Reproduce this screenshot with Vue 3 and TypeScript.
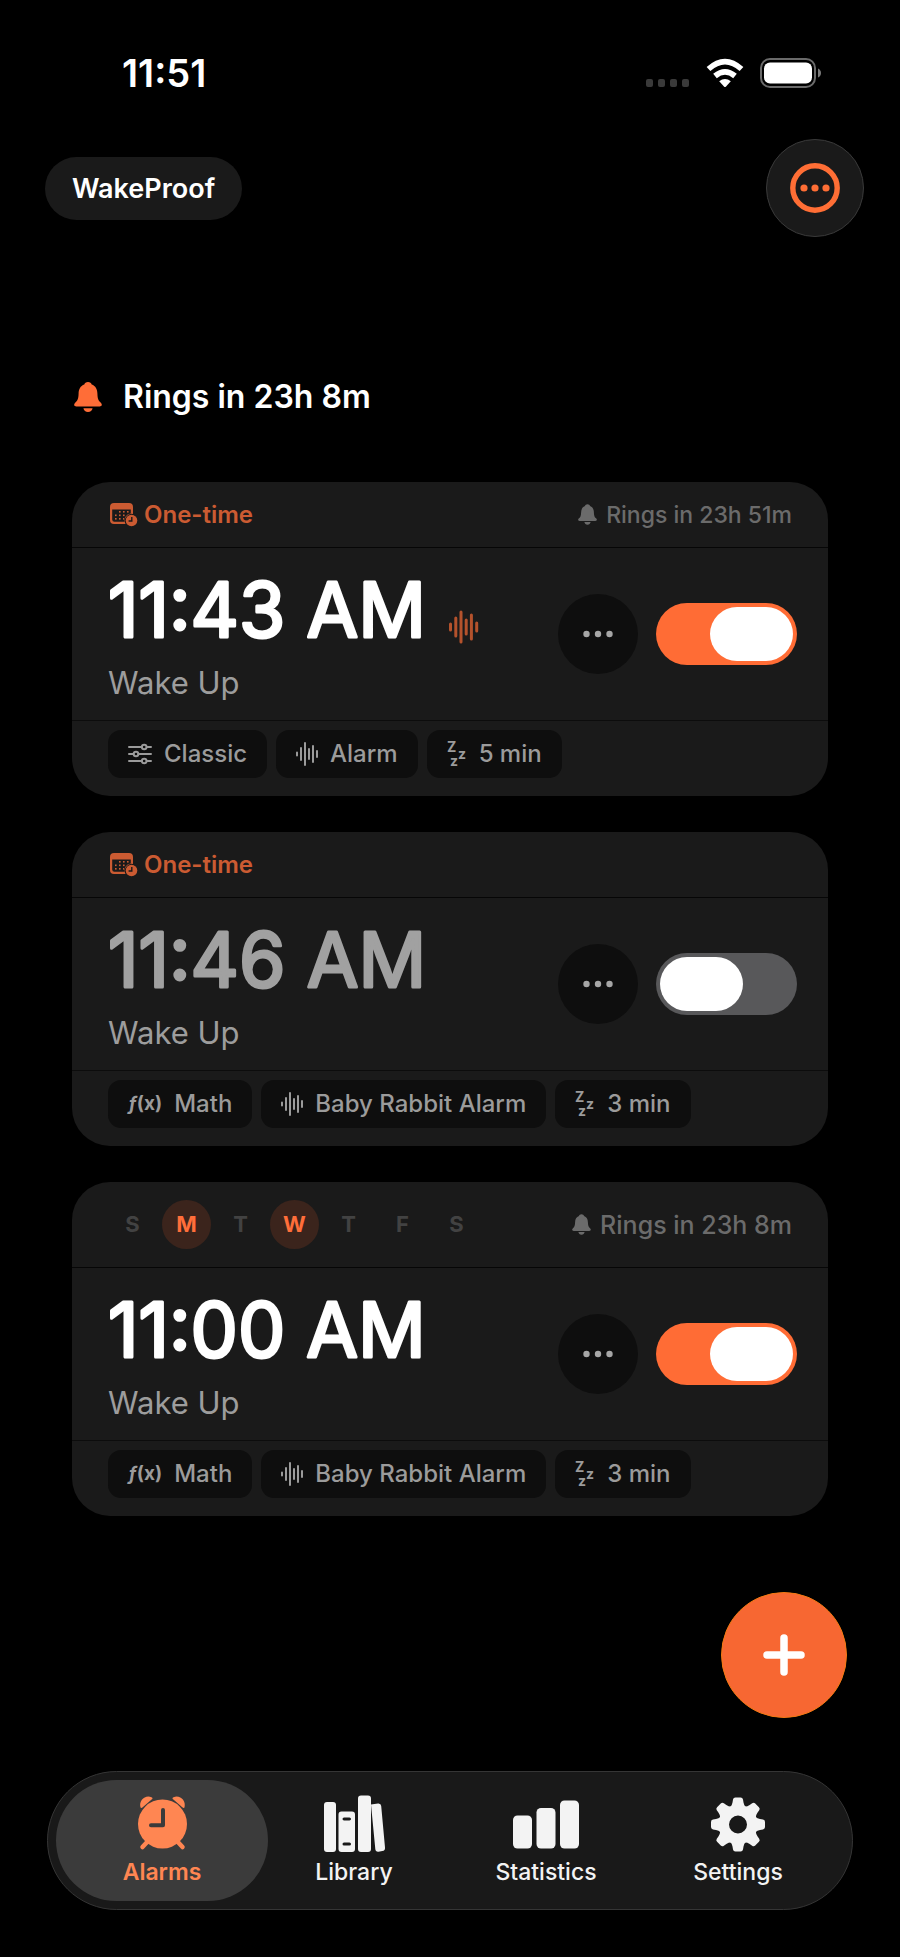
<script setup lang="ts">
import { reactive, ref } from 'vue'

type IconName = 'sliders' | 'wave' | 'zzz' | 'fx'

interface Chip {
  icon: IconName
  label: string
}

interface Alarm {
  id: number
  time: string
  label: string
  days: number[]
  rings: string
  vibrates: boolean
  enabled: boolean
  chips: Chip[]
}

type TabName = 'Alarms' | 'Library' | 'Statistics' | 'Settings'

const weekdays = ['S', 'M', 'T', 'W', 'T', 'F', 'S']
const tabs: TabName[] = ['Alarms', 'Library', 'Statistics', 'Settings']
const activeTab = ref<TabName>('Alarms')
const gearAngles = [0, 45, 90, 135, 180, 225, 270, 315]

const alarms = reactive<Alarm[]>([
  {
    id: 1,
    time: '11:43 AM',
    label: 'Wake Up',
    days: [],
    rings: 'Rings in 23h 51m',
    vibrates: true,
    enabled: true,
    chips: [
      { icon: 'sliders', label: 'Classic' },
      { icon: 'wave', label: 'Alarm' },
      { icon: 'zzz', label: '5 min' },
    ],
  },
  {
    id: 2,
    time: '11:46 AM',
    label: 'Wake Up',
    days: [],
    rings: '',
    vibrates: false,
    enabled: false,
    chips: [
      { icon: 'fx', label: 'Math' },
      { icon: 'wave', label: 'Baby Rabbit Alarm' },
      { icon: 'zzz', label: '3 min' },
    ],
  },
  {
    id: 3,
    time: '11:00 AM',
    label: 'Wake Up',
    days: [1, 3],
    rings: 'Rings in 23h 8m',
    vibrates: false,
    enabled: true,
    chips: [
      { icon: 'fx', label: 'Math' },
      { icon: 'wave', label: 'Baby Rabbit Alarm' },
      { icon: 'zzz', label: '3 min' },
    ],
  },
])
</script>

<template>
  <div class="screen">
    <div class="status">
      <span class="clock">11:51</span>
      <div class="status-icons">
        <svg class="signal" viewBox="0 0 44 8" aria-hidden="true">
          <rect x="0" width="7" height="8" rx="2" /><rect x="12" width="7" height="8" rx="2" />
          <rect x="24" width="7" height="8" rx="2" /><rect x="36" width="7" height="8" rx="2" />
        </svg>
        <svg class="wifi" viewBox="0 0 38 28" aria-hidden="true">
          <path d="M2.500 10Q19 -4.800 35.500 10" fill="none" stroke="#fff" stroke-width="5.600" />
          <path d="M9 17Q19 8.600 29 17" fill="none" stroke="#fff" stroke-width="5.600" />
          <path d="M13.200 22.200Q19 17.800 24.800 22.200L19.800 27.700Q19 28.400 18.200 27.700Z" fill="#fff" />
        </svg>
        <svg class="battery" viewBox="0 0 62 30" aria-hidden="true">
          <rect x="1" y="1" width="54" height="28" rx="9" fill="none" stroke="#6a6a6a" stroke-width="2" />
          <rect x="4" y="4.500" width="48" height="21" rx="6" fill="#fff" />
          <path d="M58 10.500Q61 12 61 15T58 19.500Z" fill="#7a7a7a" />
        </svg>
      </div>
    </div>

    <header class="topbar">
      <h1 class="brand">WakeProof</h1>
      <button class="menu" type="button" aria-label="Menu">
        <svg viewBox="0 0 50 50" aria-hidden="true">
          <circle cx="25" cy="25" r="22.200" fill="none" stroke="currentColor" stroke-width="5.400" />
          <circle cx="14" cy="25" r="3.600" /><circle cx="25" cy="25" r="3.600" /><circle cx="36" cy="25" r="3.600" />
        </svg>
      </button>
    </header>

    <main class="content">
      <h2 class="next">
        <svg class="next-bell" viewBox="0 0 28 30" aria-hidden="true">
          <path d="M14 0C16 0 17.400 1.200 17.700 2.600C21.600 4 23.300 7.400 23.400 11.500C23.600 17 24.400 18.600 26.600 20.600C28.600 22.600 28 24.400 25.600 24.400H2.400C0 24.400 -0.600 22.600 1.400 20.600C3.600 18.600 4.400 17 4.600 11.500C4.700 7.400 6.400 4 10.300 2.600C10.600 1.200 12 0 14 0ZM9.400 26.200H18.600C18.200 28.600 16.400 30 14 30S9.800 28.600 9.400 26.200Z" />
        </svg>
        Rings in 23h 8m
      </h2>

      <ul class="list">
        <li v-for="alarm in alarms" :key="alarm.id" class="card">
          <div class="card-head" :class="{ repeating: alarm.days.length }">
            <ul v-if="alarm.days.length" class="days">
              <li v-for="(day, i) in weekdays" :key="i" class="day" :class="{ on: alarm.days.includes(i) }">{{ day }}</li>
            </ul>
            <span v-else class="once">
              <svg viewBox="0 0 28 24" aria-hidden="true">
                <path d="M4 0H19Q23 0 23 4V11A7 7 0 0 0 15.500 21H4Q0 21 0 17V4Q0 0 4 0ZM2.200 6.600V16.600Q2.200 18.800 4.400 18.800H14.500A7 7 0 0 1 20.800 10.500V6.600Z" fill-rule="evenodd" />
                <g>
                  <rect x="9" y="8" width="1.600" height="1.600" /><rect x="13" y="8" width="1.600" height="1.600" /><rect x="17" y="8" width="1.600" height="1.600" />
                  <rect x="5" y="11.500" width="1.600" height="1.600" /><rect x="9" y="11.500" width="1.600" height="1.600" /><rect x="13" y="11.500" width="1.600" height="1.600" />
                  <rect x="5" y="15" width="1.600" height="1.600" /><rect x="9" y="15" width="1.600" height="1.600" /><rect x="13" y="15" width="1" height="1.600" />
                </g>
                <circle cx="21.500" cy="17.500" r="5.800" />
                <path d="M21.800 14V18H18.600" class="once-hands" />
              </svg>
              One-time
            </span>
            <span v-if="alarm.rings" class="rings">
              <svg viewBox="0 0 28 30" aria-hidden="true">
                <path d="M14 0C16 0 17.400 1.200 17.700 2.600C21.600 4 23.300 7.400 23.400 11.500C23.600 17 24.400 18.600 26.600 20.600C28.600 22.600 28 24.400 25.600 24.400H2.400C0 24.400 -0.600 22.600 1.400 20.600C3.600 18.600 4.400 17 4.600 11.500C4.700 7.400 6.400 4 10.300 2.600C10.600 1.200 12 0 14 0ZM9.400 26.200H18.600C18.200 28.600 16.400 30 14 30S9.800 28.600 9.400 26.200Z" />
              </svg>
              {{ alarm.rings }}
            </span>
          </div>

          <div class="card-body">
            <div class="info">
              <div class="time-row">
                <svg class="time" :class="{ off: !alarm.enabled }" role="img" :aria-label="alarm.time">
                  <text x="0" y="68">{{ alarm.time }}</text>
                </svg>
                <svg v-if="alarm.vibrates" class="vibe" viewBox="0 0 30 34" aria-hidden="true">
                  <path d="M1.500 14V20M6.800 8V26M12 2V32M17.200 10V24M22.400 5V29M27.700 13V21" />
                </svg>
              </div>
              <span class="name">{{ alarm.label }}</span>
            </div>
            <button class="more" type="button" :aria-label="`More options for ${alarm.time}`">
              <svg viewBox="0 0 30 8" aria-hidden="true">
                <circle cx="3.500" cy="4" r="3.200" /><circle cx="15" cy="4" r="3.200" /><circle cx="26.500" cy="4" r="3.200" />
              </svg>
            </button>
            <input v-model="alarm.enabled" class="switch" type="checkbox" role="switch" :aria-label="`Alarm at ${alarm.time}`" />
          </div>

          <ul class="card-foot">
            <li v-for="chip in alarm.chips" :key="chip.label" class="chip">
              <svg v-if="chip.icon === 'sliders'" class="ico-line ico-sliders" viewBox="0 0 24 20" aria-hidden="true">
                <path d="M1 3H13.500M19 3H23M1 10H5.200M10.800 10H23M1 17H13.500M19 17H23" />
                <circle cx="16.200" cy="3" r="2.300" /><circle cx="8" cy="10" r="2.300" /><circle cx="16.200" cy="17" r="2.300" />
              </svg>
              <svg v-else-if="chip.icon === 'wave'" class="ico-line ico-wave" viewBox="0 0 22 24" aria-hidden="true">
                <path d="M1 10.500V13.500M5 6V18M9 1V23M13 7V17M17 4V20M21 9V15" />
              </svg>
              <svg v-else-if="chip.icon === 'zzz'" class="ico-zzz" viewBox="0 0 20 24" aria-hidden="true">
                <text><tspan x="0" y="10">Z</tspan><tspan x="11" y="17">z</tspan><tspan x="3" y="24">z</tspan></text>
              </svg>
              <span v-else class="ico-fx" aria-hidden="true"><i>ƒ</i>(x)</span>
              {{ chip.label }}
            </li>
          </ul>
        </li>
      </ul>
    </main>

    <button class="fab" type="button" aria-label="Add alarm">
      <svg viewBox="0 0 42 42" aria-hidden="true"><path d="M21 4V38M4 21H38" /></svg>
    </button>

    <nav class="tabbar">
      <a
        v-for="tab in tabs"
        :key="tab"
        :href="`#${tab.toLowerCase()}`"
        class="tab"
        :class="{ active: tab === activeTab }"
        @click.prevent="activeTab = tab"
      >
        <svg v-if="tab === 'Alarms'" viewBox="0 0 64 58" aria-hidden="true">
          <path class="legs" d="M19 46L12.500 53M46 46L52.500 53" />
          <circle cx="32.500" cy="30" r="24.500" />
          <path d="M10.500 13.500C8.600 6.500 15 0.600 21.500 3.200Q23.500 4.200 21.600 5.600L13 13Q11.200 14.600 10.500 13.500Z" />
          <path d="M54.500 13.500C56.400 6.500 50 0.600 43.500 3.200Q41.500 4.200 43.400 5.600L52 13Q53.800 14.600 54.500 13.500Z" />
          <path class="hands" d="M33 16V31.300H21" />
        </svg>
        <svg v-else-if="tab === 'Library'" viewBox="0 0 64 58" aria-hidden="true">
          <rect x="2" y="8" width="12" height="50" rx="3" />
          <path d="M19.500 17.500H30Q33 17.500 33 20.500V55Q33 58 30 58H19.500Q16.500 58 16.500 55V20.500Q16.500 17.500 19.500 17.500ZM22 23.500A1.300 1.300 0 0 0 22 26.500H27.500A1.300 1.300 0 0 0 27.500 23.500ZM22 48.500A1.300 1.300 0 0 0 22 51.500H27.500A1.300 1.300 0 0 0 27.500 48.500Z" fill-rule="evenodd" />
          <rect x="36" y="1.500" width="13" height="56.500" rx="3" />
          <path d="M49 10.500L56 9.500Q59 9.200 59.200 12L63 53.500Q63.300 56.700 60.300 57L56.500 57.700Q53.600 58 53.300 55Z" />
        </svg>
        <svg v-else-if="tab === 'Statistics'" viewBox="0 0 64 58" aria-hidden="true">
          <rect x="-1" y="21.500" width="19" height="33" rx="4.500" />
          <rect x="22.500" y="14" width="19" height="40.500" rx="4.500" />
          <rect x="46" y="6.500" width="19" height="48" rx="4.500" />
        </svg>
        <svg v-else viewBox="0 0 64 58" aria-hidden="true">
          <g transform="translate(32 30.500)">
            <circle r="14.200" fill="none" stroke="currentColor" stroke-width="10.400" />
            <path
              v-for="angle in gearAngles"
              :key="angle"
              :transform="`rotate(${angle})`"
              d="M-8 -17Q-5.800 -19.500 -5.500 -22L-5 -25Q-4.600 -27 -2.600 -27H2.600Q4.600 -27 5 -25L5.500 -22Q5.800 -19.500 8 -17Z"
            />
          </g>
        </svg>
        <span>{{ tab }}</span>
      </a>
    </nav>
  </div>
</template>

<style>
body {
  margin: 0;
  background: #000;
}
</style>

<style scoped>
.screen {
  box-sizing: border-box;
  min-height: 100vh;
  display: flex;
  flex-direction: column;
  padding: 50px 0 47px;
  background: #000;
  color: #fff;
  font-family: Inter, 'Liberation Sans', sans-serif;
}
svg {
  display: block;
  fill: currentColor;
  overflow: visible;
  flex: none;
}
ul {
  list-style: none;
  margin: 0;
  padding: 0;
}
button {
  padding: 0;
  border: 0;
  font: inherit;
  cursor: pointer;
}

.status {
  display: flex;
  justify-content: space-between;
  align-items: center;
  height: 46px;
  padding: 0 78px 0 122px;
}
.clock {
  font-size: 38px;
  font-weight: 600;
}
.status-icons {
  display: flex;
  align-items: flex-end;
  gap: 16px;
}
.signal {
  width: 44px;
  height: 8px;
  margin-bottom: 1px;
  color: #3a3a3a;
}
.wifi {
  width: 38px;
  height: 28px;
  margin-bottom: 1px;
}
.battery {
  width: 62px;
  height: 30px;
}

.topbar {
  display: flex;
  justify-content: space-between;
  align-items: center;
  margin-top: 43px;
  padding: 0 36px 0 45px;
}
.brand {
  margin: 0;
  padding: 0 27px;
  border-radius: 32px;
  background: #1a1a1a;
  font-size: 27px;
  font-weight: 600;
  line-height: 63px;
}
.menu {
  box-sizing: border-box;
  display: grid;
  place-items: center;
  width: 98px;
  height: 98px;
  border: 1px solid #3a3a3a;
  border-radius: 50%;
  background: #1a1a1a;
  color: #ff6e35;
}
.menu svg {
  width: 50px;
}

.content {
  padding: 0 72px;
}
.next {
  display: flex;
  align-items: center;
  gap: 21px;
  margin: 140px 0 65px;
  padding-left: 2px;
  font-size: 32px;
  font-weight: 600;
  line-height: 40px;
}
.next-bell {
  width: 28px;
  height: 30px;
  color: #ff6d37;
}

.list {
  display: flex;
  flex-direction: column;
  gap: 36px;
}
.card {
  border-radius: 38px;
  background: #1a1a1a;
}
.card-head {
  display: flex;
  align-items: center;
  justify-content: space-between;
  height: 65px;
  padding: 0 36px;
  border-bottom: 1px solid #060606;
}
.card-head.repeating {
  height: 85px;
}
.once,
.rings {
  display: flex;
  align-items: center;
  line-height: 28px;
}
.once {
  gap: 6px;
  padding-left: 2px;
  color: #cb5b32;
  font-size: 24px;
  font-weight: 600;
}
.once svg {
  width: 28px;
  height: 24px;
}
.once-hands {
  fill: none;
  stroke: #1a1a1a;
  stroke-width: 1.4;
}
.rings {
  gap: 9px;
  margin-left: auto;
  color: #6b6b6b;
  font-size: 23px;
  font-weight: 500;
}
.repeating .rings {
  font-size: 25px;
}
.rings svg {
  width: 19px;
  height: 21px;
}
.days {
  display: flex;
  gap: 5px;
}
.day {
  width: 49px;
  border-radius: 50%;
  color: #424242;
  font-size: 22px;
  font-weight: 700;
  line-height: 49px;
  text-align: center;
}
.day.on {
  background: #3b241c;
  color: #ff6e3a;
}

.card-body {
  display: flex;
  align-items: center;
  gap: 18px;
  height: 172px;
  padding: 0 31px 0 36px;
  border-bottom: 1px solid #0c0c0c;
}
.info {
  flex: 1;
  min-width: 0;
  padding-top: 12px;
}
.time-row {
  display: flex;
  align-items: flex-end;
  gap: 20px;
}
.time {
  width: 321px;
  height: 86px;
  font-size: 75px;
  font-weight: 400;
  stroke: currentColor;
  stroke-width: 3;
  stroke-linejoin: round;
}
.time.off {
  color: #a1a1a1;
}
.vibe {
  width: 30px;
  height: 34px;
  margin-bottom: 11px;
  fill: none;
  stroke: #b4522c;
  stroke-width: 3;
  stroke-linecap: round;
}
.name {
  display: block;
  color: #9d9d9d;
  font-size: 31px;
  line-height: 56px;
}
.more {
  display: grid;
  place-items: center;
  flex: none;
  width: 80px;
  height: 80px;
  border-radius: 50%;
  background: #0e0e0e;
  color: #a6a6a6;
}
.more svg {
  width: 30px;
}
.switch {
  appearance: none;
  flex: none;
  box-sizing: border-box;
  width: 141px;
  height: 62px;
  margin: 0;
  padding: 4px;
  border-radius: 31px;
  background: #58585a;
  cursor: pointer;
}
.switch::before {
  content: '';
  display: block;
  width: 83px;
  height: 54px;
  border-radius: 27px;
  background: #fff;
}
.switch:checked {
  background: #ff6c35;
}
.switch:checked::before {
  margin-left: auto;
}

.card-foot {
  display: flex;
  gap: 9px;
  padding: 9px 36px 18px;
}
.chip {
  display: flex;
  align-items: center;
  gap: 12px;
  padding: 0 20px;
  border-radius: 13px;
  background: #0e0e0e;
  color: #9b9b9b;
  font-size: 24px;
  font-weight: 500;
  line-height: 48px;
  white-space: nowrap;
}
.ico-line {
  fill: none;
  stroke: currentColor;
  stroke-width: 2;
  stroke-linecap: round;
}
.ico-sliders {
  width: 24px;
  height: 20px;
}
.ico-wave {
  width: 22px;
  height: 24px;
}
.ico-zzz {
  width: 20px;
  height: 24px;
  font-size: 14px;
  font-weight: 700;
}
.ico-fx {
  font-size: 19px;
  font-weight: 700;
}

.fab {
  box-sizing: border-box;
  display: grid;
  place-items: center;
  align-self: flex-end;
  width: 126px;
  height: 126px;
  margin: auto 53px 53px 0;
  border: 1px solid #f37a12;
  border-radius: 50%;
  background: #f76732;
}
.fab svg {
  width: 42px;
  fill: none;
  stroke: #fff;
  stroke-width: 7.5;
  stroke-linecap: round;
}

.tabbar {
  display: flex;
  margin: 0 47px;
  padding: 8px 18px;
  border: 1px solid #353535;
  border-radius: 70px;
  background: #191919;
}
.tab {
  flex: 1;
  display: flex;
  flex-direction: column;
  align-items: center;
  gap: 4px;
  height: 107px;
  margin: 0 -10px;
  padding-top: 14px;
  border-radius: 61px;
  color: #f3f3f3;
  font-size: 23px;
  font-weight: 500;
  line-height: 32px;
  text-decoration: none;
}
.tab svg {
  width: 64px;
  height: 58px;
}
.tab.active {
  background: #3b3b3b;
  color: #ff8652;
  font-weight: 600;
}
.legs {
  stroke: currentColor;
  stroke-width: 4.5;
  stroke-linecap: round;
}
.hands {
  fill: none;
  stroke: #3b3b3b;
  stroke-width: 4;
  stroke-linecap: round;
  stroke-linejoin: round;
}
</style>
